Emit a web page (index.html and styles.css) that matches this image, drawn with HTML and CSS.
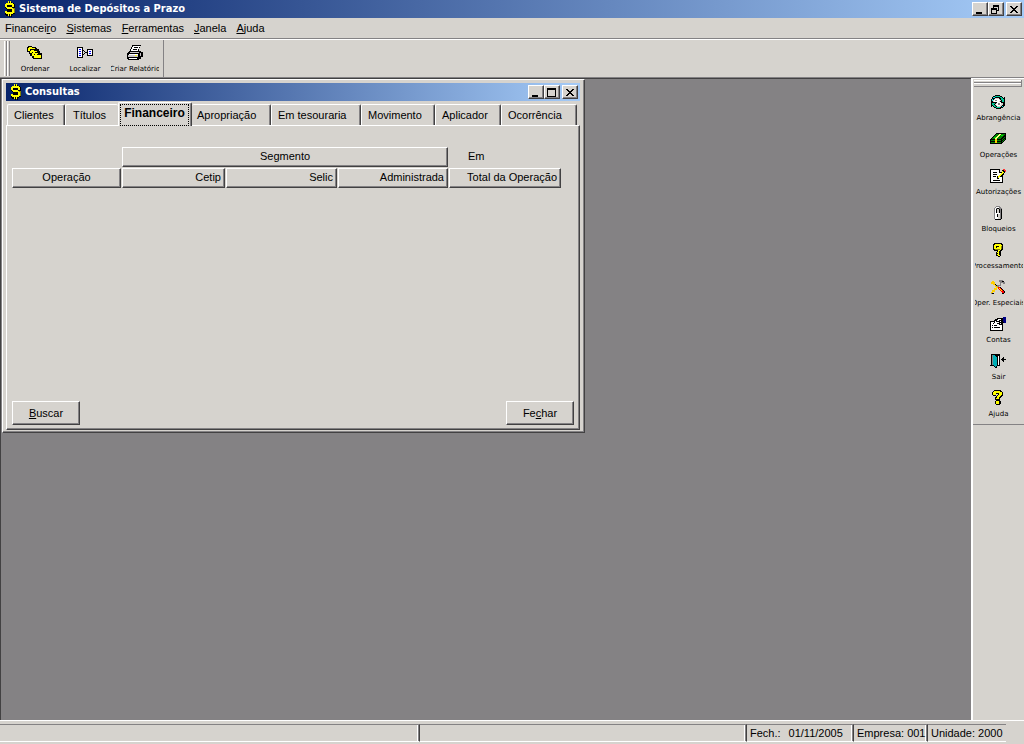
FILE: index.html
```html
<!DOCTYPE html>
<html lang="pt-BR">
<head>
<meta charset="utf-8">
<title>Sistema de Depósitos a Prazo</title>
<link rel="stylesheet" href="styles.css">
</head>
<body>
<svg class="defs" aria-hidden="true">
  <symbol id="dollar" viewBox="0 0 12 16" shape-rendering="crispEdges">
    <path fill="#000" d="M5 1h1v1h1V1h1v1h2v1h1v4H9v1h1v1h1v4H9v1H8v2H7v-2H6v2H5v-1H2v-1H1v-3h2V8H2V7H1V3h2V2h2z"/>
    <path fill="#ff0" d="M4 0h1v2h1V0h1v2h2v1h1v3H8V4H3v2h5v1h1v1h1v4H9v1H7v2H6v-2H5v2H4v-2H2v-1H1v-2h2v1h5V8H3V7H2V6H1V3h1V2h2z"/>
    <path fill="#000" d="M5 4h1v2H5zM5 8h1v3H5z"/>
    <path fill="#848200" d="M9 7h2v1H9zM10 8h1v4h-1z"/>
  </symbol>
  <symbol id="min" viewBox="0 0 10 9" shape-rendering="crispEdges"><path d="M1 7h6v2H1z"/></symbol>
  <symbol id="max" viewBox="0 0 10 9" shape-rendering="crispEdges"><path fill-rule="evenodd" d="M0 0h9v9H0zM1 2v6h7V2z"/></symbol>
  <symbol id="restore" viewBox="0 0 10 9" shape-rendering="crispEdges"><path fill-rule="evenodd" d="M2 0h6v6H6v3H0V3h2zM3 2v1h3v2h1V2zM1 5v3h4V5z"/></symbol>
  <symbol id="close" viewBox="0 0 10 9" shape-rendering="crispEdges"><path d="M1 1h2v1h1v1h2V2h1V1h2v1H8v1H7v1H6v1h1v1h1v1h1v1H7V7H6V6H4v1H3v1H1V7h1V6h1V5h1V4H3V3H2V2H1z"/></symbol>
</svg>

<div class="app">
  <header class="titlebar">
    <svg class="logo"><use href="#dollar"/></svg>
    <h1 class="title">Sistema de Depósitos a Prazo</h1>
    <div class="controls">
      <button class="control" type="button" aria-label="Minimizar"><svg><use href="#min"/></svg></button>
      <button class="control" type="button" aria-label="Restaurar"><svg><use href="#restore"/></svg></button>
      <button class="control control-close" type="button" aria-label="Fechar programa"><svg><use href="#close"/></svg></button>
    </div>
  </header>

  <nav class="menubar">
    <button class="menu" type="button">Financei<u>r</u>o</button>
    <button class="menu" type="button"><u>S</u>istemas</button>
    <button class="menu" type="button"><u>F</u>erramentas</button>
    <button class="menu" type="button"><u>J</u>anela</button>
    <button class="menu" type="button"><u>A</u>juda</button>
  </nav>

  <div class="toolbar">
    <div class="tools">
      <span class="grip"></span>
      <button class="tool" type="button">
        <svg class="icon" viewBox="0 0 16 16" shape-rendering="crispEdges">
          <path d="M1 1h4v1h4v1h1v1h2v2h1v2h2v6H6v-1H5v-2H3V9H2V7H0V2h1z"/>
          <path fill="#ff0" d="M2 2h3v1h3v1H3v2H1V3h1zM4 5h3v1h3v1H5v1H3V6h1zM6 7h2v1h3v1H7v2H5V8h1zM8 9h2v1h4v3H7v-3h1z"/>
        </svg>
        <span class="label">Ordenar</span>
      </button>
      <button class="tool" type="button">
        <svg class="icon icon-wide" viewBox="0 0 17 16" shape-rendering="crispEdges">
          <path d="M0 2h6v11H0zM6 5h1v1H6zM7 6h1v1H7zM8 7h2v1H8zM6 9h1v1H6zM7 8h1v1H7zM10 4h6v7h-6z"/>
          <path fill="#fff" d="M1 3h4v9H1zM11 5h4v5h-4z"/>
          <path fill="#00f" d="M2 4h2v1H2zM2 6h2v1H2zM2 8h2v1H2zM2 10h2v1H2zM12 6h2v1h-2zM12 8h2v1h-2z"/>
        </svg>
        <span class="label">Localizar</span>
      </button>
      <button class="tool" type="button">
        <svg class="icon" viewBox="0 0 16 16" shape-rendering="crispEdges">
          <path d="M5 0h9v1h-1v2h-1v3h2v1h2v5h-2v2h-2v1H1v-1H0V8h1V7h1V6h1V4h1V2h1z"/>
          <path fill="#fff" d="M6 1h7v1h-1v2h-1v2H4V4h1V2h1zM2 9h9v1H2zM2 13h8v1H2z"/>
          <path d="M7 2h4v1H7zM6 4h4v1H6z"/>
          <path fill="#c6c3c6" d="M3 7h9v1H3zM1 10h10v2H1zM13 8h1v3h-1z"/>
          <path fill="#ff0" d="M8 10h2v1H8z"/>
        </svg>
        <span class="label">Criar Relatório</span>
      </button>
    </div>
  </div>

  <div class="workspace">
    <main class="desktop">
      <section class="window" aria-labelledby="win-title">
        <header class="titlebar">
          <svg class="logo"><use href="#dollar"/></svg>
          <h2 class="title" id="win-title">Consultas</h2>
          <div class="controls">
            <button class="control" type="button" aria-label="Minimizar janela"><svg><use href="#min"/></svg></button>
            <button class="control" type="button" aria-label="Maximizar janela"><svg><use href="#max"/></svg></button>
            <button class="control control-close" type="button" aria-label="Fechar janela"><svg><use href="#close"/></svg></button>
          </div>
        </header>
        <div class="tabs" role="tablist">
          <button class="tab tab-clientes" role="tab" type="button">Clientes</button>
          <button class="tab tab-titulos" role="tab" type="button">Títulos</button>
          <button class="tab tab-active" role="tab" type="button" aria-selected="true" aria-controls="panel"><span class="focus">Financeiro</span></button>
          <button class="tab tab-apropriacao" role="tab" type="button">Apropriação</button>
          <button class="tab tab-tesouraria" role="tab" type="button">Em tesouraria</button>
          <button class="tab tab-movimento" role="tab" type="button">Movimento</button>
          <button class="tab tab-aplicador" role="tab" type="button">Aplicador</button>
          <button class="tab tab-ocorrencia" role="tab" type="button">Ocorrência</button>
        </div>
        <div class="panel" id="panel" role="tabpanel">
          <table class="grid">
            <colgroup><col class="col-op"><col class="col-cetip"><col class="col-selic"><col class="col-adm"><col class="col-total"></colgroup>
            <thead>
              <tr><td></td><th class="head" colspan="3" scope="colgroup">Segmento</th><th class="plain" scope="col">Em</th></tr>
              <tr>
                <th class="head" scope="col">Operação</th>
                <th class="head num" scope="col">Cetip</th>
                <th class="head num" scope="col">Selic</th>
                <th class="head num" scope="col">Administrada</th>
                <th class="head num" scope="col">Total da Operação</th>
              </tr>
            </thead>
          </table>
          <div class="actions">
            <button class="button" type="button"><u>B</u>uscar</button>
            <button class="button" type="button">Fe<u>c</u>har</button>
          </div>
        </div>
      </section>
    </main>

    <aside class="sidebar">
      <div class="sidetools">
        <span class="sidegrip"></span>
        <button class="sidetool" type="button">
          <svg class="icon" viewBox="0 0 16 16" shape-rendering="crispEdges">
            <path d="M5 1h5v1h2v1h1v1h1V3h1v6H9V8h1V7h1V6h-1V5H9V4H5v1H4v1H3v2H1V5h1V3h1V2h2zM1 8h6v1H6v1H5v1h1v1h1v1h4v-1h1v-1h1V9h2v3h-1v1h-1v1h-2v1H6v-1H4v-1H3v-1H2v1H1z"/>
            <path fill="#fff" d="M5 5h4v1h1v1H9v1h2v3h-1v1H7v-1H6v-1h1V8H4V6h1z"/>
            <path fill="#848284" d="M5 6h2v1H5zM8 9h2v2H8z"/>
            <path fill="#00c794" d="M5 2h5v1h2v1h1v1h1v3h-2V6h-1V4h-1V3H5zM2 9h3v1H4v1h1v1h1v1h4v1H6v-1H4v-1H3v-1H2z"/>
            <path fill="#00f3f7" d="M3 3h2v1H3zM2 5h1v2H2zM12 12h1v1h-1z"/>
          </svg>
          <span class="label">Abrangência</span>
        </button>
        <button class="sidetool" type="button">
          <svg class="icon" viewBox="0 0 16 16" shape-rendering="crispEdges">
            <path d="M6 2h10v7h-1v1h-1v1h-1v1h-1v1H0V8h1V7h1V6h1V5h1V4h1V3h1z"/>
            <path fill="#008200" d="M6 3h9v1h-1v1h-1v1h-1v1h-1v1H1V8h1V7h1V6h1V5h1V4h1zM1 9h10v1H1zM1 11h10v1H1zM12 8h1v1h-1zM13 7h1v1h-1zM14 6h1v1h-1zM12 10h1v1h-1zM13 9h1v1h-1zM14 8h1v1h-1z"/>
            <path fill="#00df00" d="M4 6h2v1H4zM11 4h2v1h-2z"/>
            <path fill="#ffff84" d="M9 3h2v1h-1v1H9v1H8v1H7v1H5V7h1V6h1V5h1V4h1z"/>
            <path fill="#ffcf00" d="M5 8h2v4H5z"/>
          </svg>
          <span class="label">Operações</span>
        </button>
        <button class="sidetool" type="button">
          <svg class="icon" viewBox="0 0 16 16" shape-rendering="crispEdges">
            <path d="M0 1h10v3h2V2h1V1h2v1h1v2h-1v1h-1v2h-1v8H0z"/>
            <path fill="#fff" d="M1 2h8v3h2v2H9v2h3v5H1z"/>
            <path d="M3 4h4v1H3zM3 6h4v1H3zM3 8h3v1H3zM3 12h7v1H3zM7 8h1v3H7zM8 10h1v1H8z"/>
            <path fill="#ff0" d="M12 3h1v1h1v1h-1v1h-1v1h-1v1h-1v1H9v1H8V8h1V7h1V6h1V5h1z"/>
            <path fill="#f33" d="M13 1h2v1h1v2h-1V3h-1V2h-1z"/>
          </svg>
          <span class="label">Autorizações</span>
        </button>
        <button class="sidetool" type="button">
          <svg class="icon" viewBox="0 0 16 16" shape-rendering="crispEdges">
            <path fill="#848284" d="M6 1h4v1h1v1h1v11h-1v1H5v-1H4V3h1V2h1z"/>
            <path fill="#fff" d="M6 2h3v1H6zM5 3h1v5H5zM5 8h5v6H5z"/>
            <path fill="#d6d3ce" d="M7 4h2v4H7zM8 9h2v5H8z"/>
            <path d="M6 4h1v4H6zM7 3h2v1H7zM9 4h1v4H9zM11 4h1v10h-1zM5 14h6v1H5zM7 9h1v3H7z"/>
          </svg>
          <span class="label">Bloqueios</span>
        </button>
        <button class="sidetool" type="button">
          <svg class="icon" viewBox="0 0 16 16" shape-rendering="crispEdges">
            <path d="M4 1h8v1h1v6h-1v1h-1v5h-1v1H8v-1H6v-4h1V9H4V8H3V2h1z"/>
            <path fill="#ff0" d="M5 2h6v1h1v4h-1v1h-1v6H8v-1H7v-1h1v-1H7v-1h1V8H5V7H4V3h1z"/>
            <path d="M6 4h3v1H6zM6 5h1v1H6zM9 9h1v4H9z"/>
            <path fill="#848200" d="M11 4h1v3h-1zM5 7h5v1H5z"/>
          </svg>
          <span class="label">Processamento</span>
        </button>
        <button class="sidetool" type="button">
          <svg class="icon" viewBox="0 0 16 16" shape-rendering="crispEdges">
            <path fill="#848284" d="M9 1h4v1h1v1h1v2h-2V4h-2v3H9v2H7v2H5v2H3v2H1v-2h2v-2h2V9h2V6h3V3H9z"/>
            <path fill="#ffcf00" d="M2 2h2v1h1v2h1v1h1v2H5V6H3V5H1V3h1zM6 8h2v1H7v2H5v2H3v1H1v-1h1v-2h2V9h2z"/>
            <path d="M5 5h1v1h1v1H6V6H5zM2 14h2v1H2zM12 2h2v1h-2zM10 8h1v1h1v1h1v1h1v1h1v2h-1v1h-2v-1h2v-2h-1v-1h-1v-1h-1V9h-1z"/>
            <path fill="#f00" d="M8 8h2v1h1v1h1v1h1v1h1v2h-2v-1h-1v-1h-1v-1H9v-1H8z"/>
            <path fill="#ff0" d="M9 9h1v1h1v1h1v1h-1v-1h-1v-1H9z"/>
          </svg>
          <span class="label">Oper. Especiais</span>
        </button>
        <button class="sidetool" type="button">
          <svg class="icon" viewBox="0 0 16 16" shape-rendering="crispEdges">
            <path d="M0 5h4V4h1V3h2V2h6V1h3v6h-3v8H0z"/>
            <path fill="#fff" d="M1 6h3v1h1V5h2V4h1V3h3v1H9v1h2v1H9v1h2v1H9v1h3v5H1z"/>
            <path fill="#000084" d="M13 1h3v6h-2V6h-1z"/>
            <path d="M2 9h1v1H2zM4 9h3v1H4zM2 11h1v1H2zM4 11h6v1H4zM3 7h1v1H3zM6 5h4v1H6zM7 7h3v1H7z"/>
          </svg>
          <span class="label">Contas</span>
        </button>
        <button class="sidetool" type="button">
          <svg class="icon" viewBox="0 0 16 16" shape-rendering="crispEdges">
            <path d="M1 1h9v12H7v2H5v-1H4v-1H1zM11 6h5v1h-5zM12 5h1v3h-1zM13 4h1v5h-1zM0 12h2v1H0z"/>
            <path fill="#848284" d="M2 2h1v10H2z"/>
            <path fill="#00aeb5" d="M3 2h2v1h1v1h1v9H6v1H5v-1H4v-1H3z"/>
            <path fill="#fff" d="M8 3h1v9H8z"/>
          </svg>
          <span class="label">Sair</span>
        </button>
        <button class="sidetool" type="button">
          <svg class="icon" viewBox="0 0 16 16" shape-rendering="crispEdges">
            <path d="M4 0h7v1h1v1h1v4h-1v1h-1v1h-1v2H5V7h1V6h1V5h1V4H6v2H3V5H2V2h1V1h1zM6 10h4v1h1v3h-1v1H6v-1H5v-3h1z"/>
            <path fill="#ff0" d="M4 1h6v1h2v3h-1v1h-1v1H9v2H6V8h1V6h1V5h1V3H6v2H3V2h1zM6 11h3v3H6z"/>
          </svg>
          <span class="label">Ajuda</span>
        </button>
      </div>
    </aside>
  </div>

  <footer class="statusbar">
    <span class="status status-main"></span>
    <span class="status status-mid"></span>
    <span class="status status-date"><span>Fech.:</span><span>01/11/2005</span></span>
    <span class="status status-company">Empresa: 001</span>
    <span class="status status-unit">Unidade: 2000</span>
  </footer>
</div>
</body>
</html>
```

FILE: styles.css
```css
* { box-sizing: border-box; }

:root {
  --face: #d6d3ce;
  --shadow: #848284;
  --dark: #424142;
}

body {
  margin: 0;
  font: 11px/14px "Liberation Sans", Arial, sans-serif;
  color: #000;
  background: var(--face);
}

button {
  font: inherit;
  color: inherit;
  background: none;
  border: 0;
  padding: 0;
}

u { text-underline-offset: 1px; }

.defs { position: absolute; width: 0; height: 0; }

.app {
  display: flex;
  flex-direction: column;
  min-height: 100vh;
}

/* Title bars */
.titlebar {
  display: flex;
  align-items: center;
  height: 18px;
  padding: 0 2px 0 4px;
  background: linear-gradient(to right, #08246b, #a5cbf7);
}

.logo { width: 12px; height: 16px; margin-right: 3px; }

.title {
  margin: 0;
  font: bold 11px/18px "DejaVu Sans Condensed", "DejaVu Sans", sans-serif;
  color: #fff;
}

.controls { display: flex; margin-left: auto; }

.control {
  display: flex;
  align-items: center;
  justify-content: center;
  width: 16px;
  height: 14px;
  background: var(--face);
  border: 1px solid;
  border-color: #fff var(--dark) var(--dark) #fff;
  box-shadow: inset -1px -1px var(--shadow);
}

.control svg { width: 10px; height: 9px; }
.control-close { margin-left: 2px; }

/* Menu and toolbar */
.menubar {
  display: flex;
  gap: 10px;
  height: 21px;
  padding: 0 5px;
  border-bottom: 1px solid var(--shadow);
}

.toolbar {
  height: 39px;
  border-top: 1px solid #fff;
  border-bottom: 1px solid var(--shadow);
}

.tools {
  display: flex;
  width: 164px;
  height: 100%;
  padding-left: 4px;
  border-right: 1px solid var(--shadow);
}

.grip {
  width: 6px;
  margin: 1px 0;
  border: solid;
  border-width: 0 1px;
  border-color: #fff var(--shadow) #fff #fff;
  background: linear-gradient(to right, var(--face) 0 1px, var(--shadow) 1px 2px, #fff 2px 3px, var(--face) 3px);
}

.tool, .sidetool {
  display: flex;
  flex-direction: column;
  align-items: center;
}

.tool { width: 50px; padding-top: 5px; }
.icon { width: 16px; height: 16px; }
.icon-wide { width: 17px; }

.label {
  display: flex;
  justify-content: center;
  width: 48px;
  overflow: hidden;
  white-space: nowrap;
  font: 7px/10px "DejaVu Sans", sans-serif;
}

.tool .label { margin-top: 3px; }

/* Workspace */
.workspace { display: flex; flex: 1; }

.desktop {
  position: relative;
  flex: 1;
  min-height: 360px;
  background: #848284;
  border-top: 1px solid var(--dark);
  border-left: 1px solid var(--dark);
}

.window {
  position: absolute;
  top: 0;
  left: 1px;
  display: flex;
  flex-direction: column;
  width: 583px;
  min-height: 354px;
  padding: 3px 4px 2px 3px;
  background: var(--face);
  border: 1px solid;
  border-color: #fff var(--dark) var(--dark) #fff;
  box-shadow: inset -1px -1px var(--shadow);
}

/* Tabs */
.tabs {
  display: flex;
  align-items: flex-end;
  height: 24px;
  padding-left: 1px;
}

.tab {
  height: 21px;
  padding: 0 0 1px 6px;
  text-align: left;
  white-space: nowrap;
  border: solid;
  border-width: 1px 1px 0;
  border-color: #fff var(--dark) #fff #fff;
  border-radius: 2px 2px 0 0;
  box-shadow: inset -1px 0 var(--shadow);
}

.tab-clientes { width: 58px; }
.tab-titulos { width: 53px; padding-left: 7px; border-right: 0; box-shadow: none; }
.tab-active {
  z-index: 1;
  width: 74px;
  height: 24px;
  margin-bottom: -1px;
  padding: 1px 2px 1px 1px;
  background: var(--face);
}
.focus {
  display: block;
  padding-bottom: 4px;
  border: 1px dotted #000;
  font: bold 12px/16px "Liberation Sans", sans-serif;
  text-align: center;
}
.tab-apropriacao { width: 79px; padding-left: 5px; border-left: 0; }
.tab-tesouraria { width: 90px; }
.tab-movimento { width: 74px; }
.tab-aplicador { width: 66px; }
.tab-ocorrencia { width: 76px; }

.panel {
  display: flex;
  flex: 1;
  flex-direction: column;
  padding: 21px 5px 4px;
  border: 1px solid;
  border-color: #fff var(--dark) var(--dark) #fff;
  box-shadow: inset -1px -1px var(--shadow);
}

.grid {
  width: 551px;
  table-layout: fixed;
  border-collapse: separate;
  border-spacing: 1px;
  margin: -1px;
}

.grid th, .grid td { height: 20px; padding: 0 3px 2px; font-weight: normal; }
.col-op { width: 109px; }
.col-cetip { width: 103px; }
.col-selic { width: 111px; }
.col-adm { width: 110px; }

.head {
  border: 1px solid;
  border-color: #fff var(--dark) var(--dark) #fff;
  box-shadow: inset -1px -1px var(--shadow);
}
.grid .num { text-align: right; }
.grid .plain { padding-left: 19px; text-align: left; }

.actions {
  display: flex;
  justify-content: space-between;
  margin-top: auto;
}

.button {
  width: 68px;
  height: 24px;
  border: 1px solid;
  border-color: #fff var(--dark) var(--dark) #fff;
  box-shadow: inset -1px -1px var(--shadow);
}

/* Side toolbar */
.sidebar {
  width: 53px;
  border-left: 2px solid #fff;
  border-top: 1px solid #fff;
}

.sidetools {
  display: flex;
  flex-direction: column;
  gap: 7px;
  padding-bottom: 4px;
  border-bottom: 1px solid var(--shadow);
}

.sidegrip {
  height: 7px;
  margin: 1px 2px 0 1px;
  border-right: 1px solid var(--shadow);
  background: linear-gradient(#fff 0 1px, var(--face) 1px 2px, var(--shadow) 2px 3px, #fff 3px 4px, var(--face) 4px 6px, var(--shadow) 6px);
}

.sidetool { width: 100%; height: 30px; }
.sidetool .icon { margin-right: 1px; }
.sidetool .label { margin-top: 3px; }

/* Status bar */
.statusbar {
  display: flex;
  height: 24px;
  padding: 3px 18px 2px 0;
  border-top: 1px solid #fff;
}

.status {
  display: flex;
  gap: 8px;
  padding: 1px 0 0 3px;
  border-top: 1px solid var(--shadow);
  border-bottom: 1px solid #fff;
  white-space: nowrap;
}
.status:not(:last-child) {
  border-right: 1px solid var(--dark);
  box-shadow: inset -1px 0 var(--shadow), inset -2px 0 #fff;
}
.status-main { width: 420px; }
.status-mid { flex: 1; }
.status-date { width: 107px; }
.status-company { width: 74px; }
.status-unit { width: 78px; }
```
